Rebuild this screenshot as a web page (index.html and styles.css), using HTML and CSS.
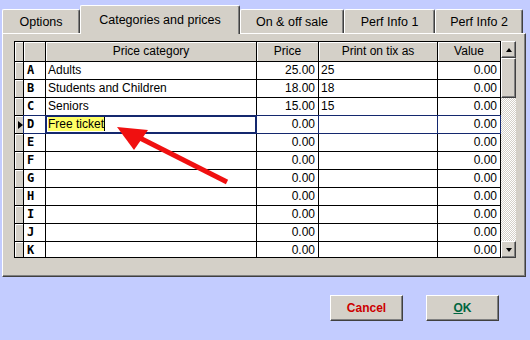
FILE: index.html
```html
<!DOCTYPE html>
<html lang="en">
<head>
  <meta charset="UTF-8">
  <title>Categories and prices</title>
  <link rel="stylesheet" href="styles.css">
</head>
<body>
  <div class="dialog">
    <div class="tabs">
      <div class="tab t-options">Options</div>
      <div class="tab t-cat active">Categories and prices</div>
      <div class="tab t-sale">On &amp; off sale</div>
      <div class="tab t-perf1">Perf Info 1</div>
      <div class="tab t-perf2">Perf Info 2</div>
    </div>

    <div class="panel">
      <div class="grid-wrap">
        <div class="grid">
          <!-- header -->
          <div class="cell ind"></div>
          <div class="cell hd"></div>
          <div class="cell hd">Price category</div>
          <div class="cell hd">Price</div>
          <div class="cell hd">Print on tix as</div>
          <div class="cell hd">Value</div>

          <div class="cell ind"></div><div class="cell key">A</div><div class="cell txt">Adults</div><div class="cell num">25.00</div><div class="cell txt">25</div><div class="cell num">0.00</div>
          <div class="cell ind"></div><div class="cell key">B</div><div class="cell txt">Students and Children</div><div class="cell num">18.00</div><div class="cell txt">18</div><div class="cell num">0.00</div>
          <div class="cell ind"></div><div class="cell key">C</div><div class="cell txt">Seniors</div><div class="cell num">15.00</div><div class="cell txt">15</div><div class="cell num">0.00</div>
          <div class="cell ind"><span class="pointer"></span></div><div class="cell key cur">D</div><div class="cell txt cur editing"><span class="sel">Free ticket</span></div><div class="cell num cur">0.00</div><div class="cell txt cur"></div><div class="cell num cur">0.00</div>
          <div class="cell ind"></div><div class="cell key">E</div><div class="cell txt"></div><div class="cell num">0.00</div><div class="cell txt"></div><div class="cell num">0.00</div>
          <div class="cell ind"></div><div class="cell key">F</div><div class="cell txt"></div><div class="cell num">0.00</div><div class="cell txt"></div><div class="cell num">0.00</div>
          <div class="cell ind"></div><div class="cell key">G</div><div class="cell txt"></div><div class="cell num">0.00</div><div class="cell txt"></div><div class="cell num">0.00</div>
          <div class="cell ind"></div><div class="cell key">H</div><div class="cell txt"></div><div class="cell num">0.00</div><div class="cell txt"></div><div class="cell num">0.00</div>
          <div class="cell ind"></div><div class="cell key">I</div><div class="cell txt"></div><div class="cell num">0.00</div><div class="cell txt"></div><div class="cell num">0.00</div>
          <div class="cell ind"></div><div class="cell key">J</div><div class="cell txt"></div><div class="cell num">0.00</div><div class="cell txt"></div><div class="cell num">0.00</div>
          <div class="cell ind"></div><div class="cell key">K</div><div class="cell txt"></div><div class="cell num">0.00</div><div class="cell txt"></div><div class="cell num">0.00</div>
        </div>

        <div class="scrollbar">
          <div class="sb-btn"><span class="arr-up"></span></div>
          <div class="sb-thumb"></div>
          <div class="sb-track"></div>
          <div class="sb-btn"><span class="arr-down"></span></div>
        </div>
      </div>
    </div>

    <div class="buttons">
      <button class="btn cancel">Cancel</button>
      <button class="btn ok"><u>O</u>K</button>
    </div>
  </div>

  <!-- annotation arrow drawn over the grid -->
  <svg class="arrow" width="530" height="340" viewBox="0 0 530 340">
    <line x1="227" y1="182" x2="134" y2="135" stroke="#f01010" stroke-width="5"/>
    <polygon points="117,127 148,130 134,150" fill="#f01010"/>
  </svg>
</body>
</html>
```

FILE: styles.css
```css
body {
  margin: 0;
  width: 530px;
  height: 340px;
  overflow: hidden;
  position: relative;
  background: #c3ccff;
  font-family: 'Liberation Sans', Arial, sans-serif;
  font-size: 12px;
  color: #000;
}
.dialog {
  padding-left: 2px;
}

/* tabs */
.tabs {
  display: flex;
  align-items: flex-end;
  height: 33px;
}
.tab {
  box-sizing: border-box;
  height: 24px;
  background: #d4d0c8;
  border-top: 1px solid #fff;
  border-left: 1px solid #fff;
  border-right: 1px solid #404040;
  border-radius: 2px 2px 0 0;
  box-shadow: inset -1px 0 #808080;
  display: flex;
  align-items: center;
  justify-content: center;
  font-size: 12.5px;
  padding-top: 1px;
}
.tab.active {
  height: 29px;
  margin-bottom: -1px;
  position: relative;
  z-index: 1;
  padding-top: 0;
  padding-bottom: 1px;
}
.t-options { width: 78px; }
.t-cat     { width: 160px; }
.t-sale    { width: 104px; }
.t-perf1   { width: 91px; }
.t-perf2   { width: 88px; }

/* panel */
.panel {
  box-sizing: border-box;
  width: 524px;
  height: 244px;
  background: #d4d0c8;
  border-top: 1px solid #fff;
  border-left: 1px solid #fff;
  border-right: 1px solid #404040;
  border-bottom: 1px solid #404040;
  box-shadow: inset -1px -1px #808080;
  padding: 7px 0 0 11px;
}
.grid-wrap {
  display: flex;
}
.grid {
  display: grid;
  grid-template-columns: 8px 21px 210px 61px 118px 62px;
  grid-template-rows: 19px repeat(10, 17px) 15px;
  gap: 1px;
  padding: 1px;
  background: #000;
}
.cell {
  background: #fff;
  line-height: 17px;
  white-space: nowrap;
  overflow: hidden;
}
.hd {
  background: #d4d0c8;
  text-align: center;
  line-height: 19px;
  box-shadow: inset 1px 1px #fff;
}
.ind {
  background: #d4d0c8;
  box-shadow: inset 1px 1px #fff;
  display: flex;
  align-items: center;
  justify-content: center;
}
.pointer {
  width: 0;
  height: 0;
  border-left: 5px solid #000;
  border-top: 4px solid transparent;
  border-bottom: 4px solid transparent;
  margin-left: 2px;
}
.key {
  font-family: 'DejaVu Sans Mono', monospace;
  font-weight: bold;
  font-size: 12px;
  padding-left: 3px;
}
.txt { padding-left: 2px; }
.num {
  text-align: right;
  padding-right: 3px;
}
.cur { box-shadow: 0 0 0 1px #14286e; }
.editing { box-shadow: 0 0 0 1px #14286e, inset 0 0 0 1px #14286e; }
.sel {
  background: #ffff66;
  border-right: 1px solid #000;
}

/* scrollbar */
.scrollbar {
  width: 15px;
  display: flex;
  flex-direction: column;
  background: repeating-conic-gradient(#d4d0c8 0 25%, #fff 0 50%) 0 0 / 2px 2px;
}
.sb-btn, .sb-thumb {
  box-sizing: border-box;
  background: #d4d0c8;
  border: 1px solid;
  border-color: #fff #404040 #404040 #fff;
  box-shadow: inset -1px -1px #808080;
}
.sb-btn {
  height: 17px;
  display: flex;
  align-items: center;
  justify-content: center;
}
.sb-thumb { height: 40px; }
.sb-track { flex: 1; }
.arr-up, .arr-down {
  width: 0;
  height: 0;
  border-left: 3px solid transparent;
  border-right: 3px solid transparent;
}
.arr-up   { border-bottom: 4px solid #000; }
.arr-down { border-top: 4px solid #000; }

/* buttons */
.buttons {
  display: flex;
  justify-content: flex-end;
  gap: 23px;
  padding-right: 31px;
  margin-top: 18px;
}
.btn {
  width: 73px;
  height: 26px;
  padding: 0;
  background: #d4d0c8;
  border: 1px solid;
  border-color: #fff #404040 #404040 #fff;
  box-shadow: inset -1px -1px #808080;
  font-family: 'Liberation Sans', Arial, sans-serif;
  font-weight: bold;
  font-size: 12px;
}
.cancel { color: #cc0000; }
.ok     { color: #00663f; }

.arrow {
  position: absolute;
  top: 0;
  left: 0;
  pointer-events: none;
}
```
